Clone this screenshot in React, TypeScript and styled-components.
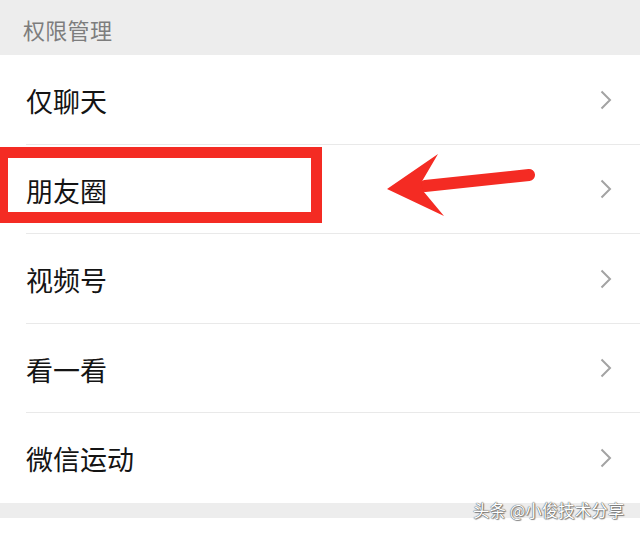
import React from 'react'
import styled, { createGlobalStyle } from 'styled-components'

const GlobalStyle = createGlobalStyle`
  html, body {
    margin: 0;
    padding: 0;
    background: #ffffff;
  }
  body {
    font-family: 'Noto Sans CJK SC', 'Noto Sans', sans-serif;
  }
`

const Page = styled.div`
  position: relative;
  width: 640px;
  height: 535px;
  overflow: hidden;
  background: #ffffff;
  display: flex;
  flex-direction: column;
`

const SectionHeader = styled.div`
  height: 55px;
  background: #ededed;
  display: flex;
  align-items: center;
  padding: 3px 0 0 23px;
  box-sizing: border-box;
  font-size: 22px;
  color: #7d7d7d;
  letter-spacing: 0.3px;
`

const List = styled.ul`
  list-style: none;
  margin: 0;
  padding: 0;
  background: #ffffff;
`

const Row = styled.li<{ last?: boolean }>`
  position: relative;
  height: 89.5px;
  display: flex;
  align-items: center;
  justify-content: space-between;
  padding: 0 28px 0 26px;
  box-sizing: border-box;

  &::after {
    content: '';
    display: ${({ last }) => (last ? 'none' : 'block')};
    position: absolute;
    left: 26px;
    right: 0;
    bottom: 0;
    height: 1px;
    background: #e9e9e9;
  }
`

const Label = styled.span`
  font-size: 27px;
  color: #141414;
  line-height: 1;
  margin-top: 2px;
`

const Chevron = styled.svg`
  width: 12px;
  height: 20px;
  display: block;
`

const Footer = styled.div`
  height: 15px;
  background: #ededed;
`

const Highlight = styled.div`
  position: absolute;
  left: -2px;
  top: 147px;
  width: 324px;
  height: 76px;
  border: 11px solid #f42b23;
  border-left-width: 10px;
  box-sizing: border-box;
  pointer-events: none;
`

const Arrow = styled.svg`
  position: absolute;
  left: 0;
  top: 0;
  width: 640px;
  height: 535px;
  pointer-events: none;
`

const Watermark = styled.div`
  position: absolute;
  left: 473px;
  top: 500px;
  font-size: 16.5px;
  line-height: 20px;
  color: #ffffff;
  white-space: nowrap;
  text-shadow: 0 0 1px #555, 0 0 1px #555, 1px 1px 1px rgba(0, 0, 0, 0.45);
`

const items = ['仅聊天', '朋友圈', '视频号', '看一看', '微信运动']

function ChevronIcon() {
  return (
    <Chevron viewBox="0 0 12 20">
      <polyline points="1.5,1.5 10,10 1.5,18.5" fill="none" stroke="#a3a3a3" strokeWidth="2" strokeLinejoin="miter" />
    </Chevron>
  )
}

export default function App() {
  return (
    <>
      <GlobalStyle />
      <Page>
        <SectionHeader>权限管理</SectionHeader>
        <List>
          {items.map((item, i) => (
            <Row key={item} last={i === items.length - 1}>
              <Label>{item}</Label>
              <ChevronIcon />
            </Row>
          ))}
        </List>
        <Footer />
        <Highlight />
        <Arrow viewBox="0 0 640 535">
          <line x1="425" y1="186" x2="529" y2="175" stroke="#f42b23" strokeWidth="12" strokeLinecap="round" />
          <polygon points="387,189 438,154 421,183 424,192 444,216" fill="#f42b23" />
        </Arrow>
        <Watermark>头条 @小俊技术分享</Watermark>
      </Page>
    </>
  )
}
